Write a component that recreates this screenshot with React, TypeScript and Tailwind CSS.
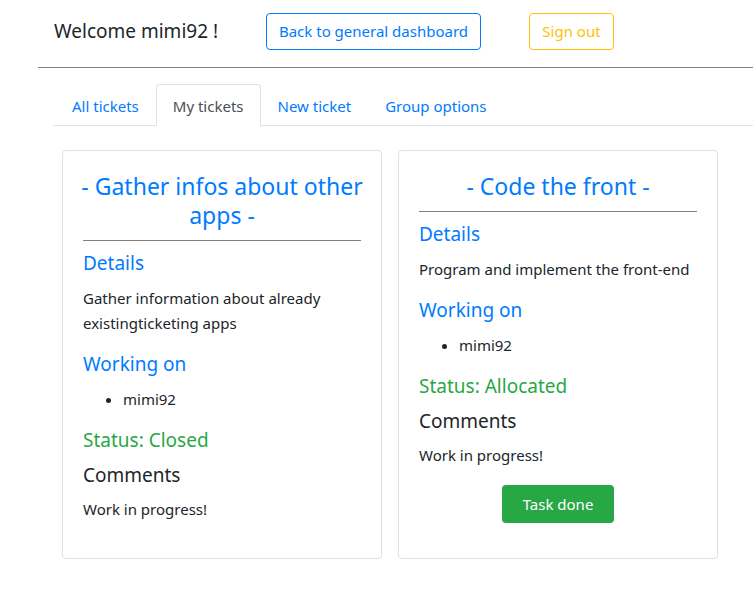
import * as React from 'react';

interface Ticket {
  title: string;
  details: string;
  workers: string[];
  status: string;
  comments: string;
  canFinish?: boolean;
}

const tickets: Ticket[] = [
  {
    title: '- Gather infos about other apps -',
    details: 'Gather information about already existingticketing apps',
    workers: ['mimi92'],
    status: 'Closed',
    comments: 'Work in progress!',
  },
  {
    title: '- Code the front -',
    details: 'Program and implement the front-end',
    workers: ['mimi92'],
    status: 'Allocated',
    comments: 'Work in progress!',
    canFinish: true,
  },
];

const tabs = ['All tickets', 'My tickets', 'New ticket', 'Group options'];

function TicketCard({ ticket }: { ticket: Ticket }) {
  return (
    <div className="flex w-[320px] flex-col rounded border border-[#dfdfdf] bg-white px-5 pb-[19px] pt-[21px]">
      <h4 className="-mx-2 text-center text-[23px] leading-[29px] text-[#007bff]">{ticket.title}</h4>
      <hr className="mb-[10px] mt-[10px] border-t border-[#808080]" />
      <h5 className="mb-[11px] text-[19px] leading-[24px] text-[#007bff]">Details</h5>
      <p className="mb-4 text-[15px] leading-[25px]">{ticket.details}</p>
      <h5 className="mb-[11px] text-[19px] leading-[24px] text-[#007bff]">Working on</h5>
      <ul className="mb-[17px] list-disc pl-10 text-[15px] leading-[24px]">
        {ticket.workers.map((w) => (
          <li key={w}>{w}</li>
        ))}
      </ul>
      <h5 className="mb-[11px] text-[19px] leading-[24px] text-[#28a745]">Status: {ticket.status}</h5>
      <h5 className="mb-[10px] text-[19px] leading-[24px]">Comments</h5>
      <p className="mb-[18px] text-[15px] leading-[24px]">{ticket.comments}</p>
      {ticket.canFinish && (
        <div className="flex justify-center">
          <button className="h-[38px] w-[112px] rounded bg-[#28a745] text-[15px] text-white">
            Task done
          </button>
        </div>
      )}
    </div>
  );
}

export default function App() {
  return (
    <div className="min-h-[613px] bg-white font-['Noto_Sans',sans-serif] text-[#212529]">
      {/* Header */}
      <div className="flex items-start gap-12 pl-[54px] pt-[13px]">
        <div className="w-[164px] whitespace-nowrap pt-[6px] text-[19px] leading-[24px]">Welcome mimi92 !</div>
        <button className="h-[37px] w-[215px] rounded border border-[#007bff] text-[15px] text-[#007bff]">
          Back to general dashboard
        </button>
        <button className="h-[37px] w-[85px] rounded border border-[#ffc107] text-[15px] text-[#ffc107]">
          Sign out
        </button>
      </div>
      <hr className="ml-[38px] mt-[17px] border-t border-[#808080]" />

      {/* Tabs */}
      <div className="ml-[53px] mt-[16px] flex border-b border-[#dee2e6] pl-[2px]">
        {tabs.map((t) => (
          <div
            key={t}
            className={
              t === 'My tickets'
                ? '-mb-px rounded-t border border-[#dee2e6] border-b-white bg-white px-4 pb-[7px] pt-[9px] text-[15px] leading-[24px] text-[#495057]'
                : '-mb-px border border-transparent px-4 pb-[7px] pt-[9px] text-[15px] leading-[24px] text-[#007bff]'
            }
          >
            {t}
          </div>
        ))}
      </div>

      {/* Cards */}
      <div className="ml-[62px] mt-[24px] flex items-stretch gap-4">
        {tickets.map((t) => (
          <TicketCard key={t.title} ticket={t} />
        ))}
      </div>
    </div>
  );
}
